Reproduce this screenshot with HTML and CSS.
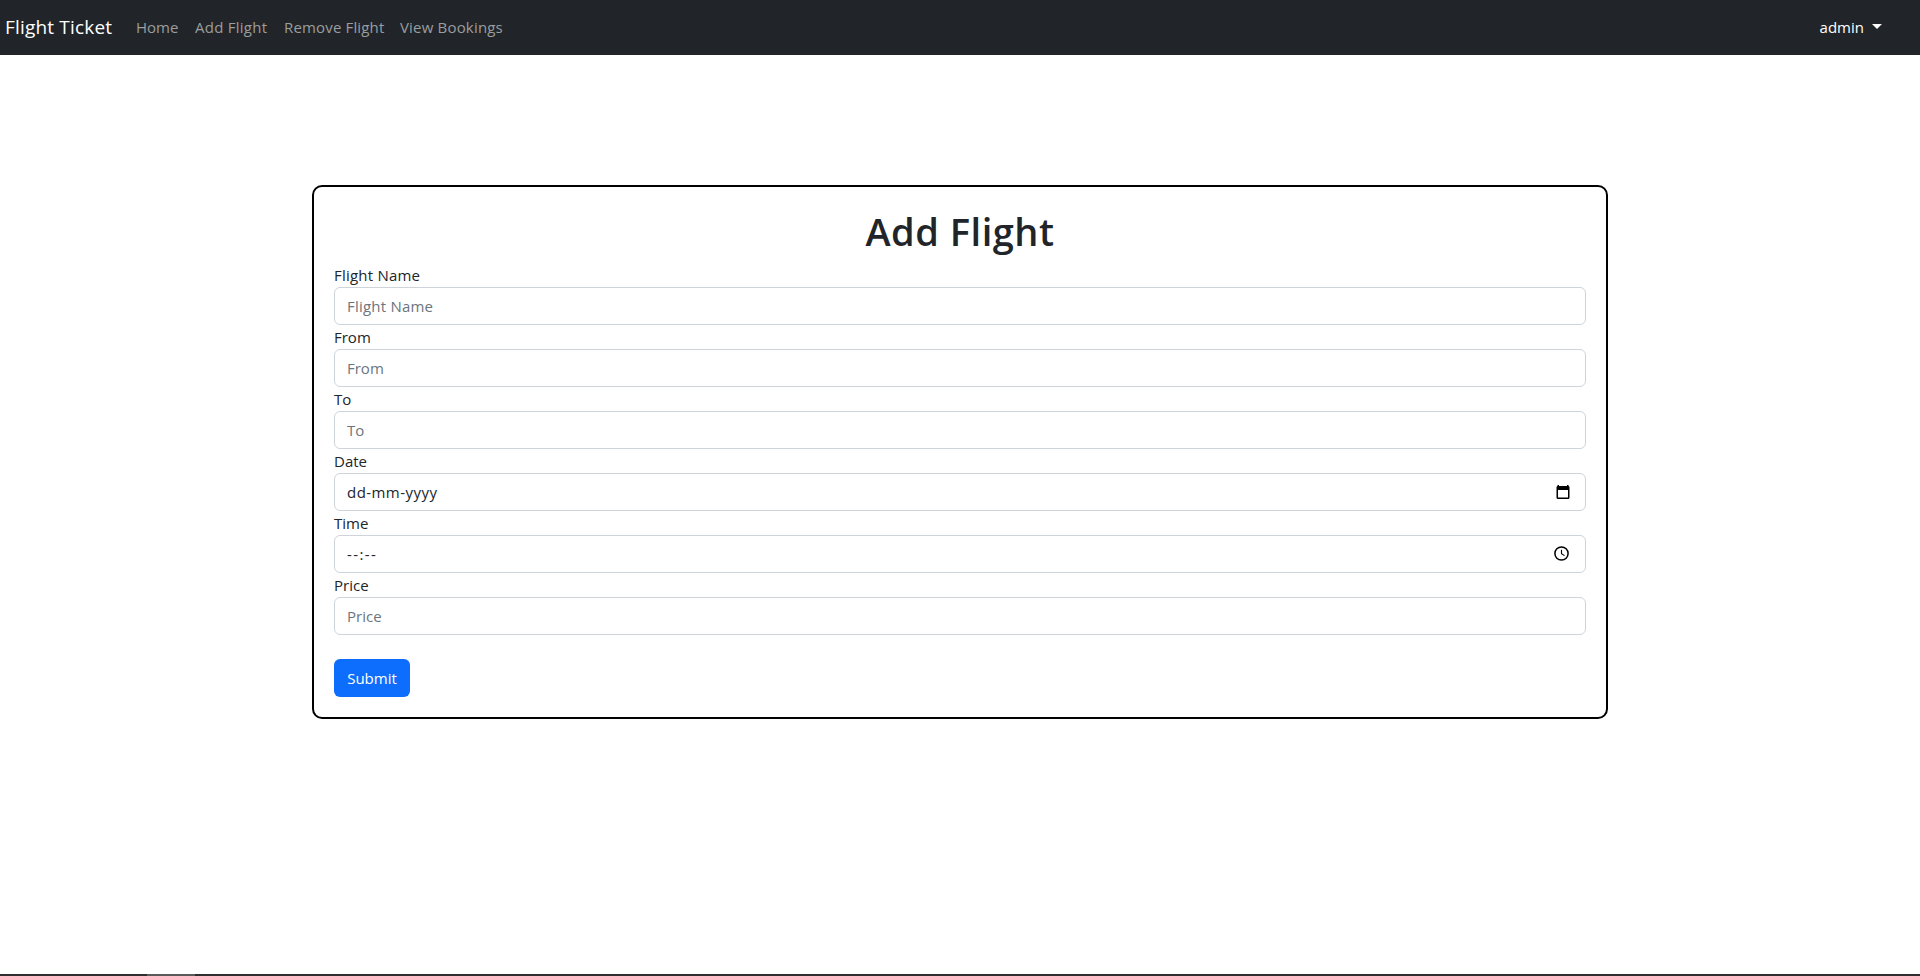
FILE: index.html
```html
<!DOCTYPE html>
<html lang="en">
<head>
<meta charset="utf-8">
<title>Add Flight</title>
<link rel="stylesheet" href="styles.css">
</head>
<body>
<nav class="navbar">
  <a class="brand">Flight Ticket</a>
  <div class="links">
    <a class="link home">Home</a>
    <a class="link add">Add Flight</a>
    <a class="link remove">Remove Flight</a>
    <a class="link bookings">View Bookings</a>
  </div>
  <a class="user"><span>admin</span><i class="caret"></i></a>
</nav>
<main class="page">
  <form class="card">
    <h1 class="title">Add Flight</h1>
    <label class="label wide">Flight Name</label>
    <input class="control wide" type="text" placeholder="Flight Name">
    <label class="label">From</label>
    <input class="control" type="text" placeholder="From">
    <label class="label">To</label>
    <input class="control" type="text" placeholder="To">
    <label class="label">Date</label>
    <div class="control picker"><span class="date">dd-mm-yyyy</span>
      <svg class="calendar" width="14" height="15" viewBox="0 0 14 15"><path fill-rule="evenodd" d="M1.500 0h1.500v1h8V0h1.500v1Q13.500 1 13.500 2.500v10Q13.500 14 12 14H2Q.5 14 .5 12.500v-10Q.5 1 1.500 1zM2 5v7.500h10V5z"/></svg>
    </div>
    <label class="label">Time</label>
    <div class="control picker"><span class="time">--:--</span>
      <svg class="clock" width="15" height="15" viewBox="0 0 15 15" fill="none" stroke="#000"><circle cx="7.500" cy="7.500" r="6.600" stroke-width="1.500"/><path d="M7.500 3.700v4l3 1.900" stroke-width="1.100"/></svg>
    </div>
    <label class="label">Price</label>
    <input class="control" type="text" placeholder="Price">
    <button class="submit" type="button">Submit</button>
  </form>
</main>
<footer class="taskbar"><i class="task"></i></footer>
</body>
</html>
```
FILE: styles.css
```css
* { box-sizing: border-box; }
body {
  margin: 0;
  height: 976px;
  display: flex;
  flex-direction: column;
  overflow: hidden;
  background: #fff;
  color: #212529;
  font: 15px/24px "Segoe UI", "Open Sans", "Noto Sans", sans-serif;
}
.navbar {
  display: flex;
  align-items: center;
  height: 55px;
  padding: 0 38px 1px 5px;
  background: #212529;
}
.brand {
  width: 123px;
  color: #fff;
  font-size: 19px;
  line-height: 30px;
  letter-spacing: 0.18px;
  white-space: nowrap;
}
.links { display: flex; }
.link { padding: 0 8px; color: #9b9d9e; white-space: nowrap; }
.home { width: 59px; }
.add { width: 89px; letter-spacing: 0.26px; }
.remove { width: 116px; letter-spacing: 0.16px; }
.bookings { width: 120px; letter-spacing: 0.18px; }
.user {
  display: flex;
  align-items: center;
  gap: 8px;
  margin-left: auto;
  color: #fff;
}
.caret {
  border: 5px solid transparent;
  border-top-color: #fff;
  border-bottom: 0;
  margin-top: -1px;
}
.page { flex: 1; padding-top: 130px; }
.card {
  width: 1296px;
  margin: 0 auto;
  padding: 20px;
  border: 2px solid #000;
  border-radius: 10px;
}
.title {
  margin: 0 0 8px;
  padding-top: 1px;
  font-size: 38px;
  font-weight: 600;
  line-height: 47px;
  letter-spacing: 0.5px;
  text-align: center;
}
.label { display: block; }
.control {
  display: block;
  width: 100%;
  height: 38px;
  padding: 6px 12px;
  border: 1px solid #ced4da;
  border-radius: 6px;
  background: #fff;
  color: #212529;
  font: inherit;
}
.control::placeholder { color: #6c757d; opacity: 1; }
.wide { letter-spacing: 0.22px; }
.picker {
  display: flex;
  align-items: center;
  justify-content: space-between;
  padding-right: 15px;
}
.date { letter-spacing: 0.45px; }
.time { letter-spacing: 1.4px; }
.clock { margin: 0 1px 2px 0; }
.submit {
  display: block;
  width: 76px;
  height: 38px;
  margin-top: 24px;
  padding: 0;
  border: 0;
  border-radius: 6px;
  background: #0d6efd;
  color: #fff;
  font: inherit;
}
.taskbar { height: 2px; background: #302e30; }
.task { display: block; width: 48px; height: 2px; margin-left: 147px; background: #5b5a5b; }
```
